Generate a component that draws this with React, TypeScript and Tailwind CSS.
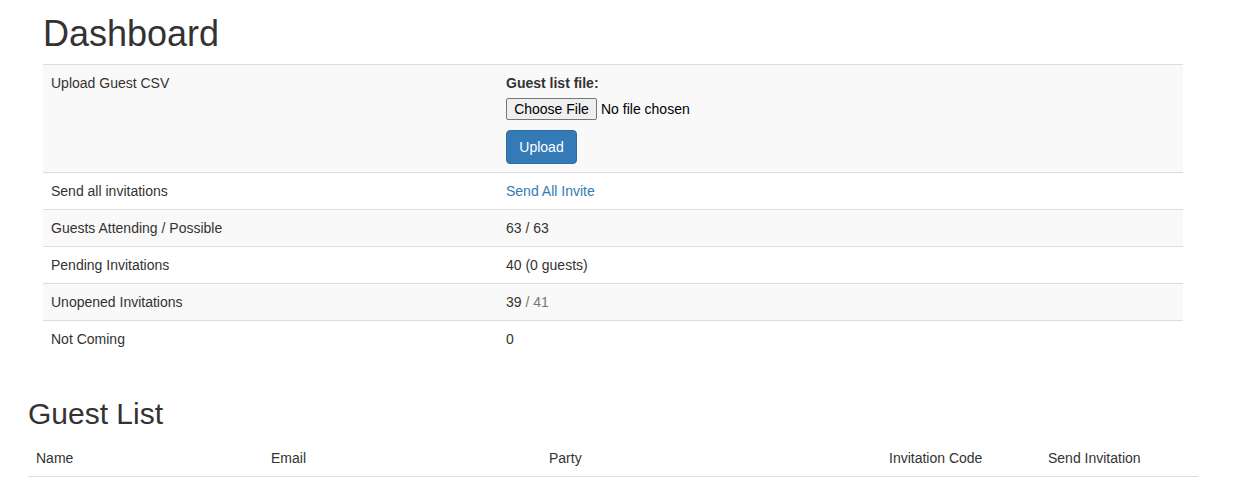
import React from "react";

const rows: { label: string; value: React.ReactNode }[] = [
  { label: "Send all invitations", value: <a href="#" className="text-[#337ab7]">Send All Invite</a> },
  { label: "Guests Attending / Possible", value: "63 / 63" },
  { label: "Pending Invitations", value: "40 (0 guests)" },
  {
    label: "Unopened Invitations",
    value: (
      <span>
        39 <span className="text-[#777]">/ 41</span>
      </span>
    ),
  },
  { label: "Not Coming", value: "0" },
];

export default function App() {
  return (
    <div className="w-[1170px] ml-[28px] font-['Liberation_Sans',Arial,sans-serif] text-[14px] leading-[20px] text-[#333] bg-white">
      <div className="px-[15px]">
        <h1 className="text-[36px] leading-[39.6px] font-normal mt-[14px] mb-[10px]">Dashboard</h1>
        <table className="w-full border-collapse">
          <tbody>
            <tr className="bg-[#f9f9f9]">
              <td className="w-[455px] p-[8px] border-t border-[#ddd] align-top">Upload Guest CSV</td>
              <td className="p-[8px] border-t border-[#ddd] align-top">
                <label className="block font-bold mb-[5px]">Guest list file:</label>
                <div className="flex items-center h-[22px]">
                  <span className="inline-flex items-center justify-center w-[91px] h-[22px] bg-[#efefef] border border-[#767676] rounded-[2px] text-black">
                    Choose File
                  </span>
                  <span className="ml-[4px] text-black">No file chosen</span>
                </div>
                <button className="mt-[10px] w-[71px] h-[34px] bg-[#337ab7] border border-[#2e6da4] rounded-[4px] text-white leading-[20px]">
                  Upload
                </button>
              </td>
            </tr>
            {rows.map((r, i) => (
              <tr key={r.label} className={i % 2 === 1 ? "bg-[#f9f9f9]" : ""}>
                <td className="p-[8px] border-t border-[#ddd] align-top">{r.label}</td>
                <td className="p-[8px] border-t border-[#ddd] align-top">{r.value}</td>
              </tr>
            ))}
          </tbody>
        </table>
      </div>
      <h2 className="text-[30px] leading-[33px] font-normal mt-[40px] mb-[10px]">Guest List</h2>
      <table className="w-full border-collapse">
        <thead>
          <tr>
            <th className="w-[235px] p-[8px] text-left font-normal border-b-2 border-[#ddd]">Name</th>
            <th className="w-[278px] p-[8px] text-left font-normal border-b-2 border-[#ddd]">Email</th>
            <th className="w-[340px] p-[8px] text-left font-normal border-b-2 border-[#ddd]">Party</th>
            <th className="w-[159px] p-[8px] text-left font-normal border-b-2 border-[#ddd]">Invitation Code</th>
            <th className="p-[8px] text-left font-normal border-b-2 border-[#ddd]">Send Invitation</th>
          </tr>
        </thead>
      </table>
    </div>
  );
}
